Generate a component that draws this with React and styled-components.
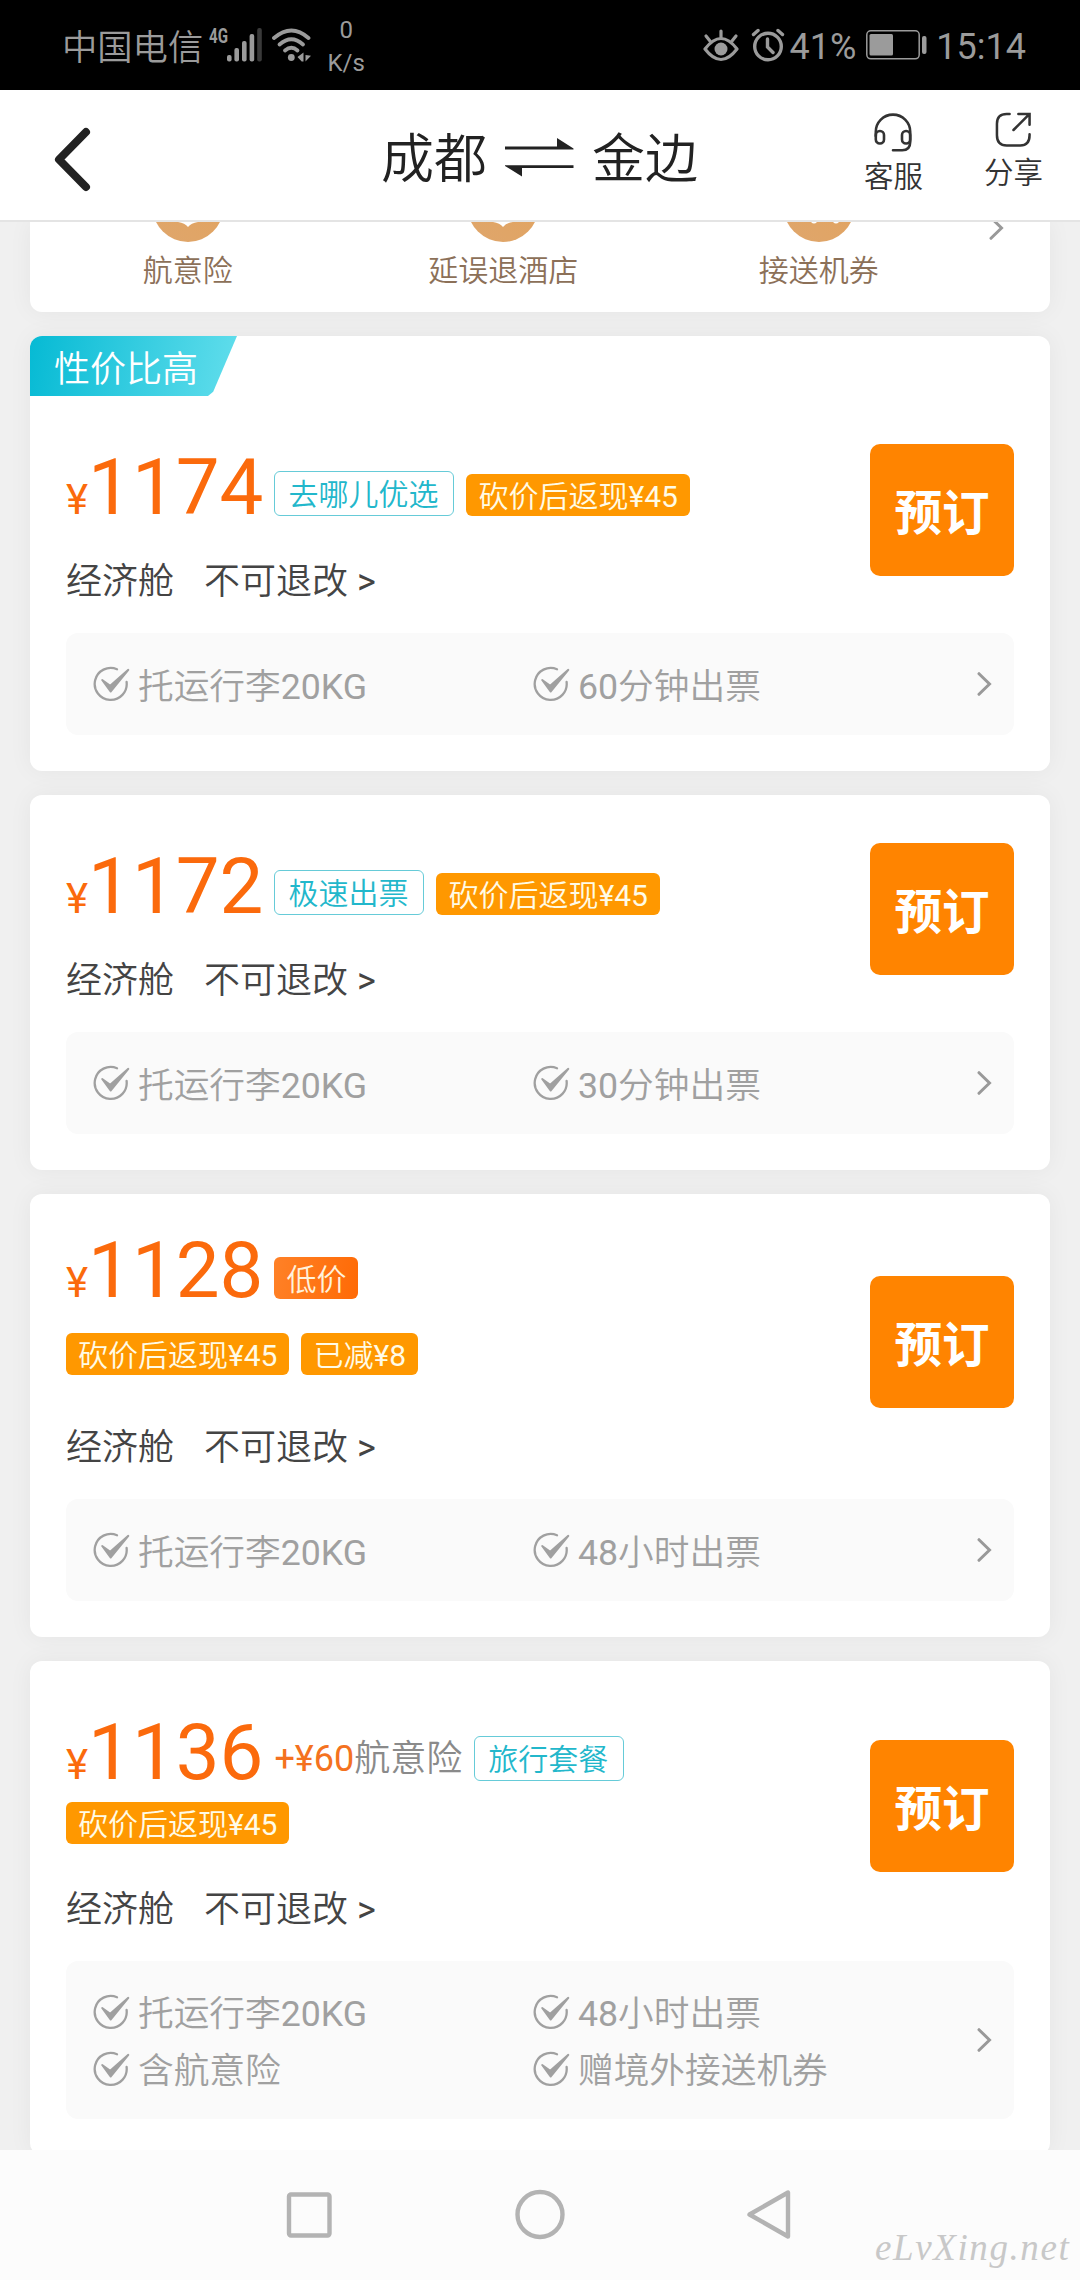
import React from 'react'
import styled, { createGlobalStyle, css } from 'styled-components';

const GlobalStyle = createGlobalStyle`
  * {
    box-sizing: border-box;
  }

  body {
    margin: 0;
    background-color: #f0f0f0;
    font-family: Roboto, "Noto Sans CJK SC DemiLight", "Noto Sans CJK SC", sans-serif;
    color: #333;
  }

  svg {
    display: block;
    flex: none;
  }
`;

const Screen = styled.div`
  width: 1080px;
  height: 2280px;
  display: flex;
  flex-direction: column;
  overflow: hidden;
`;

/* status bar */

const StatusBar = styled.div`
  flex: none;
  height: 90px;
  background-color: #000;
  color: #9b9b9b;
  display: flex;
  align-items: center;
  padding: 0 54px 0 62px;
`;

const Carrier = styled.span`
  font-size: 35.3px;
  font-weight: 300;
  line-height: 90px;
  padding-top: 5px;
`;

const Network = styled.span`
  font-size: 21px;
  font-weight: 700;
  line-height: 20px;
  width: 18px;
  margin: 0 0 18px 6px;
  transform: scaleX(0.72);
  transform-origin: left;
`;

const Speed = styled.span`
  width: 40px;
  margin-left: 14px;
  padding-top: 3px;
  font-size: 24px;
  line-height: 33px;
  text-align: center;
`;

const StatusRight = styled.div`
  display: flex;
  align-items: center;
  margin-left: auto;
`;

const StatusText = styled.span`
  font-size: 36px;
  line-height: 90px;
  padding-top: 3px;
  margin-left: ${(props) => props.$gap}px;
`;

const StatusGap = styled.span`
  width: ${(props) => props.$size}px;
`;

/* header */

const Header = styled.header`
  flex: none;
  height: 132px;
  background-color: #fff;
  border-bottom: 2px solid #e4e4e4;
  display: flex;
  justify-content: space-between;
  padding: 0 37px 0 52px;
`;

const BackButton = styled.div`
  width: 180px;
  padding-top: 35px;
`;

const Route = styled.h1`
  margin: 0 0 0 -17px;
  font-size: 53px;
  font-weight: 350;
  line-height: 134px;
  color: #222;
  display: flex;
  align-items: center;
  gap: 18px;

  span {
    padding-top: 10px;
  }

  svg {
    margin-top: 5px;
  }
`;

const Actions = styled.div`
  display: flex;
  gap: 61px;
`;

const Action = styled.div`
  display: flex;
  flex-direction: column;
  align-items: center;
  padding-top: ${(props) => props.$top}px;
  font-size: 29.5px;
  line-height: 36px;
  gap: 7px;
`;

/* benefits */

const Content = styled.main`
  flex: 1;
  min-height: 0;
  overflow: hidden;
  padding: 0 30px;
  display: flex;
  flex-direction: column;
  gap: 24px;
`;

const cardBase = css`
  flex: none;
  background-color: #fff;
  box-shadow: 0 0 24px rgba(0, 0, 0, 0.05);
`;

const Benefits = styled.section`
  ${cardBase}
  height: 90px;
  border-radius: 0 0 12px 12px;
  display: grid;
  grid-template-columns: 315.5px 315.5px 315.5px 73.5px;
`;

const Benefit = styled.div`
  display: flex;
  flex-direction: column;
  align-items: center;
  gap: 10px;
  font-size: 30px;
  line-height: 38px;
  color: #8c7058;
`;

const MoreBenefits = styled.div`
  padding-left: 12px;
  margin-top: -6px;
  clip-path: inset(6px 0 0 0);
`;

/* fare cards */

const Card = styled.section`
  ${cardBase}
  border-radius: 12px;
  padding-bottom: 36px;
`;

const RibbonRow = styled.div`
  height: 60px;
`;

const Ribbon = styled.div`
  width: 207px;
  height: 60px;
  padding-left: 24px;
  border-radius: 12px 0 0 0;
  background: linear-gradient(100deg, #06bad4, #62deec);
  clip-path: polygon(0 0, 100% 0, 88.5% 93%, 86% 100%, 0 100%);
  color: #fff;
  font-size: 36px;
  line-height: 68px;
`;

const Summary = styled.div`
  display: flex;
  justify-content: space-between;
  padding: 0 36px 0;
`;

const Info = styled.div`
  padding-top: ${(props) => props.$top}px;
`;

const PriceRow = styled.div`
  display: flex;
  align-items: flex-end;
  height: 58px;
`;

const Price = styled.span`
  color: #fb6a0c;
  font-size: 78px;
  line-height: 56px;
  margin-right: 11px;

  small {
    font-size: 42px;
    line-height: 0;
  }
`;

const Extra = styled.span`
  font-size: 36px;
  line-height: 44px;
  color: #8a8a8a;
  margin: 0 12px 0 0;

  em {
    font-style: normal;
    color: #f47220;
  }
`;

const TagRow = styled.div`
  display: flex;
  margin-top: ${(props) => props.$top}px;
`;

const tagKinds = {
  outline: css`
    height: 45px;
    line-height: 45px;
    padding: 0 15px 0 13px;
    border: 1px solid #66cbd8;
    color: #22b7cb;
  `,
  cash: css`
    background-color: #ff9800;
    color: #fffbe6;
  `,
  low: css`
    background: linear-gradient(100deg, #ff8127, #ff6a05);
    color: #fff2dc;
  `,
};

const Tag = styled.span`
  height: 42px;
  padding: 0 12px;
  margin-right: 12px;
  border-radius: 6px;
  font-size: 30px;
  line-height: 46px;
  white-space: nowrap;
  ${(props) => tagKinds[props.$kind]}
`;

const Cabin = styled.div`
  display: flex;
  gap: 30px;
  margin-top: ${(props) => props.$top}px;
  font-size: 36px;
  line-height: 40px;
  color: #444;
`;

const BookButton = styled.button`
  width: 144px;
  height: 132px;
  margin-top: ${(props) => props.$top}px;
  padding: 0 0 1px;
  border: none;
  border-radius: 10px;
  background-color: #ff8400;
  color: #fff;
  font-family: Roboto, "Noto Sans CJK SC", sans-serif;
  font-size: 47.5px;
  font-weight: 700;
`;

const Details = styled.div`
  margin: 31px 36px 0;
  padding: 0 22px 0 27px;
  border-radius: 12px;
  background-color: #fafafa;
  height: ${(props) => (props.$rows > 1 ? 158 : 102)}px;
  display: flex;
  align-items: center;
`;

const DetailGrid = styled.div`
  flex: 1;
  display: grid;
  grid-template-columns: 440px 1fr;
  grid-auto-rows: 57px;
`;

const Detail = styled.div`
  display: flex;
  align-items: center;
  gap: 8px;
  color: #a0a0a0;
  font-size: 35.7px;
  line-height: 57px;

  span {
    padding-top: 6px;
  }
`;

/* system navigation */

const NavBar = styled.nav`
  flex: none;
  height: 130px;
  background-color: #fcfcfc;
  display: flex;
  align-items: center;
  padding: 0 8px 0 285px;
`;

const NavIcon = styled.svg`
  width: 50px;
  height: 52px;
  margin-right: ${(props) => props.$gap || 0}px;
  fill: none;
  stroke: #b3b3b3;
  stroke-width: 4.4;
  stroke-linejoin: round;
`;

const Watermark = styled.span`
  margin: 66px 0 0 auto;
  width: 197px;
  font-family: "Liberation Serif", serif;
  font-style: italic;
  font-size: 37px;
  line-height: 44px;
  letter-spacing: 1.6px;
  color: #c8c8c8;
  white-space: nowrap;
`;

const SignalIcon = () => (
  <svg width="35" height="34" viewBox="0 0 35 34" fill="#9b9b9b">
    <rect x="0" y="27" width="4.6" height="6.5" rx="2" />
    <rect x="7.4" y="20" width="4.6" height="13.5" rx="2" />
    <rect x="15" y="13" width="4.6" height="20.5" rx="2" />
    <rect x="22.6" y="6" width="4.6" height="27.5" rx="2" />
    <rect x="30.2" y="0" width="4.6" height="33.5" rx="2" fill="#3a3a3a" />
  </svg>
)

const WifiIcon = () => (
  <svg width="40" height="34" viewBox="0 0 40 34" fill="none" stroke="#9b9b9b" strokeWidth="3.8" strokeLinecap="round">
    <path d="M2 10Q19.5 -5 36.5 10" />
    <path d="M7.500 16.500Q19.500 6 31 16.500" />
    <path d="M13 22.500Q19.500 17 25.500 22.500" />
    <circle cx="19.300" cy="29.500" r="3.400" fill="#9b9b9b" stroke="none" />
    <path d="M31.500 24.500v9h-1.800l-4.200-4.500zM33.500 24.500v9l5.500-5.800-5.500-.7z" fill="#9b9b9b" stroke="none" />
  </svg>
)

const EyeIcon = () => (
  <svg width="36" height="33" viewBox="0 0 36 33" fill="none" stroke="#9b9b9b" strokeWidth="3.2" strokeLinecap="round">
    <path d="M2 20Q18 -1 34 20Q18 41 2 20Z" strokeLinejoin="round" />
    <circle cx="18" cy="20" r="6.500" fill="#9b9b9b" stroke="none" />
    <path d="M18 2v6M3 7l4 5M33 7l-4 5" />
  </svg>
)

const AlarmIcon = () => (
  <svg width="34" height="34" viewBox="0 0 34 34" fill="none" stroke="#9b9b9b" strokeWidth="3.400" strokeLinecap="round">
    <circle cx="17" cy="18.500" r="13.300" />
    <path d="M16.500 11v8l5.500 5.500M2.500 6.500l4.500-4M31.500 6.500l-4.500-4" />
  </svg>
)

const BatteryIcon = () => (
  <svg width="61" height="30" viewBox="0 0 61 30" fill="#9b9b9b">
    <rect x="0.800" y="0.800" width="52.400" height="28" rx="4" fill="none" stroke="#9b9b9b" strokeWidth="1.500" />
    <rect x="3.500" y="4" width="23.500" height="21.500" rx="1.500" />
    <rect x="56" y="6" width="4.500" height="18" rx="2" />
  </svg>
)

const SwapIcon = () => (
  <svg width="69" height="40" viewBox="0 0 69 40" fill="#222">
    <path d="M0 8.500H52V0L68.500 10.500V11.500H0zM68.500 30H17V38.500L0 28V27.200H68.500z" />
  </svg>
)

const HeadsetIcon = () => (
  <svg width="38" height="39" viewBox="0 0 38 39" fill="none" stroke="#333" strokeWidth="2.600" strokeLinecap="round" strokeLinejoin="round">
    <path d="M1.800 23V18.800a17.200 17.200 0 0 1 34.400 0V29q0 8.300-8 8.300H19" />
    <rect x="1.800" y="18" width="8.200" height="12.500" rx="4" />
    <rect x="28" y="18" width="8.200" height="12.500" rx="4" />
  </svg>
)

const ShareIcon = () => (
  <svg width="37" height="37" viewBox="0 0 38 38" fill="none" stroke="#333" strokeWidth="2.600" strokeLinecap="round">
    <path d="M15 3H12Q2 3 2 13V25Q2 35.500 12 35.500H26Q35.500 35.500 35.500 25V24" />
    <path d="M24 3H35.500V14M35 3.500L19 19.500" />
  </svg>
)

const CheckIcon = () => (
  <svg width="37" height="36" viewBox="0 0 37 36">
    <path d="M24 3.200A16 16 0 1 0 33.600 16" fill="none" stroke="#a0a0a0" strokeWidth="2.300" strokeLinecap="round" />
    <path d="M9.200 14L17.200 19.800L35.300 3.800L17.600 25.500Z" fill="#a0a0a0" stroke="#a0a0a0" strokeWidth="2" strokeLinejoin="round" />
  </svg>
)

const Chevron = () => (
  <svg width="15" height="24" viewBox="0 0 15 24" fill="none" stroke="#999" strokeWidth="3" strokeLinecap="round">
    <path d="M2 1.700L12.500 12L2 22.300" />
  </svg>
)

/* only the lower edge of each coin shows below the header */
const Coin = ({ id, children }) => (
  <svg width="72" height="20" viewBox="0 51 72 20">
    <defs>
      <linearGradient id={id} x1="0" y1="1" x2="1" y2="0">
        <stop offset="0" stopColor="#dfa66c" />
        <stop offset="1" stopColor="#e2a35e" />
      </linearGradient>
    </defs>
    <circle cx="36" cy="35.500" r="35.500" fill={`url(#${id})`} />
    {children}
  </svg>
)

const shield = <path d="M26 51Q33 52 36 56Q39 52 46 51z" fill="#fff" />
const wheels = <path d="M28 51h6q-3 3-6 0zM50 51h6q-3 3-6 0z" fill="#fff" />

const benefits = [
  { id: 'coin-a', label: '航意险', mark: shield },
  { id: 'coin-b', label: '延误退酒店', mark: shield },
  { id: 'coin-c', label: '接送机券', mark: wheels },
];

const cashback = { kind: 'cash', text: '砍价后返现¥45' };

const fares = [
  {
    price: 1174,
    ribbon: '性价比高',
    tags: [{ kind: 'outline', text: '去哪儿优选' }, cashback],
    details: ['托运行李20KG', '60分钟出票'],
    top: 62, cabinTop: 46, bookTop: 48,
  },
  {
    price: 1172,
    tags: [{ kind: 'outline', text: '极速出票' }, cashback],
    details: ['托运行李20KG', '30分钟出票'],
    top: 62, cabinTop: 46, bookTop: 48,
  },
  {
    price: 1128,
    tags: [{ kind: 'low', text: '低价' }],
    moreTags: [cashback, { kind: 'cash', text: '已减¥8' }],
    details: ['托运行李20KG', '48小时出票'],
    top: 47, tagTop: 34, cabinTop: 53, bookTop: 82,
  },
  {
    price: 1136,
    extra: { cost: '+¥60', name: '航意险' },
    tags: [{ kind: 'outline', text: '旅行套餐' }],
    moreTags: [cashback],
    details: ['托运行李20KG', '48小时出票', '含航意险', '赠境外接送机券'],
    top: 62, tagTop: 21, cabinTop: 46, bookTop: 79,
  },
];

const Fare = ({ fare }) => (
  <Card>
    {fare.ribbon && (
      <RibbonRow>
        <Ribbon>{fare.ribbon}</Ribbon>
      </RibbonRow>
    )}
    <Summary>
      <Info $top={fare.top}>
        <PriceRow>
          <Price><small>¥</small>{fare.price}</Price>
          {fare.extra && <Extra><em>{fare.extra.cost}</em>{fare.extra.name}</Extra>}
          {fare.tags.map((tag) => <Tag key={tag.text} $kind={tag.kind}>{tag.text}</Tag>)}
        </PriceRow>
        {fare.moreTags && (
          <TagRow $top={fare.tagTop}>
            {fare.moreTags.map((tag) => <Tag key={tag.text} $kind={tag.kind}>{tag.text}</Tag>)}
          </TagRow>
        )}
        <Cabin $top={fare.cabinTop}>
          <span>经济舱</span>
          <span>不可退改 &gt;</span>
        </Cabin>
      </Info>
      <BookButton $top={fare.bookTop}>预订</BookButton>
    </Summary>
    <Details $rows={fare.details.length / 2}>
      <DetailGrid>
        {fare.details.map((text) => (
          <Detail key={text}>
            <CheckIcon />
            <span>{text}</span>
          </Detail>
        ))}
      </DetailGrid>
      <Chevron />
    </Details>
  </Card>
)

const App = () => {
  return (
    <Screen>
      <GlobalStyle />
      <StatusBar>
        <Carrier>中国电信</Carrier>
        <Network>4G</Network>
        <SignalIcon />
        <StatusGap $size={10} />
        <WifiIcon />
        <Speed>0<br />K/s</Speed>
        <StatusRight>
          <EyeIcon />
          <StatusGap $size={12} />
          <AlarmIcon />
          <StatusText $gap={5}>41%</StatusText>
          <StatusGap $size={10} />
          <BatteryIcon />
          <StatusText $gap={9}>15:14</StatusText>
        </StatusRight>
      </StatusBar>
      <Header>
        <BackButton>
          <svg width="42" height="70" viewBox="0 0 42 70" fill="none" stroke="#222" strokeWidth="8" strokeLinecap="round" strokeLinejoin="round">
            <path d="M34 7L7 34.500L34 62" />
          </svg>
        </BackButton>
        <Route>
          <span>成都</span>
          <SwapIcon />
          <span>金边</span>
        </Route>
        <Actions>
          <Action $top={23}>
            <HeadsetIcon />
            客服
          </Action>
          <Action $top={21}>
            <ShareIcon />
            分享
          </Action>
        </Actions>
      </Header>
      <Content>
        <Benefits>
          {benefits.map((item) => (
            <Benefit key={item.id}>
              <Coin id={item.id}>{item.mark}</Coin>
              {item.label}
            </Benefit>
          ))}
          <MoreBenefits>
            <Chevron />
          </MoreBenefits>
        </Benefits>
        {fares.map((fare) => <Fare key={fare.price} fare={fare} />)}
      </Content>
      <NavBar>
        <NavIcon viewBox="0 0 50 52" $gap={180}>
          <rect x="4" y="5.500" width="40.500" height="41" rx="2" />
        </NavIcon>
        <NavIcon viewBox="0 0 50 52" $gap={180}>
          <circle cx="25" cy="25.500" r="22.500" />
        </NavIcon>
        <NavIcon viewBox="0 0 50 52">
          <path d="M43 3.500V47.500L4.500 25.500Z" />
        </NavIcon>
        <Watermark>eLvXing.net</Watermark>
      </NavBar>
    </Screen>
  )
}

export default App
